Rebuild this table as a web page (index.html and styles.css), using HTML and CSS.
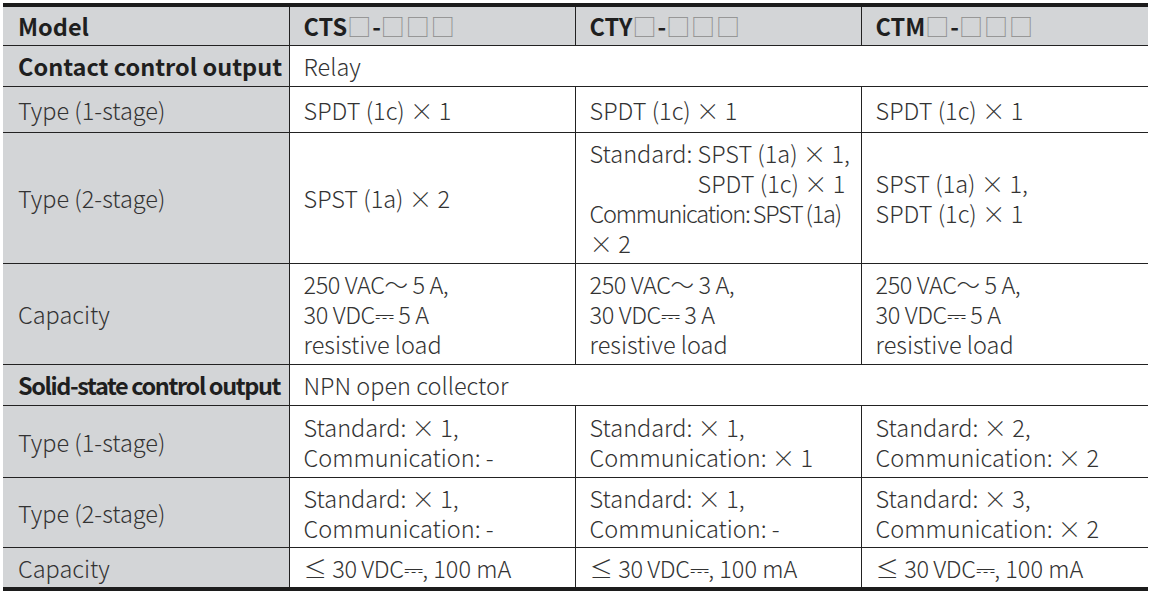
FILE: index.html
```html
<!DOCTYPE html>
<html lang="en">
<head>
<meta charset="utf-8">
<title>Control output</title>
<link rel="stylesheet" href="styles.css">
</head>
<body>
<table class="spec">
  <colgroup>
    <col class="c1"><col class="c2"><col class="c3"><col class="c4">
  </colgroup>
  <tr class="head h38">
    <th class="lab b">Model</th>
    <th class="b">CTS<span class="box">□</span>-<span class="box">□□□</span></th>
    <th class="b">CTY<span class="box">□</span>-<span class="box">□□□</span></th>
    <th class="b">CTM<span class="box">□</span>-<span class="box">□□□</span></th>
  </tr>
  <tr class="h40">
    <td class="lab b">Contact control output</td>
    <td colspan="3">Relay</td>
  </tr>
  <tr class="h45">
    <td class="lab">Type (1-stage)</td>
    <td>SPDT (1c) × 1</td>
    <td>SPDT (1c) × 1</td>
    <td>SPDT (1c) × 1</td>
  </tr>
  <tr class="h130">
    <td class="lab">Type (2-stage)</td>
    <td>SPST (1a) × 2</td>
    <td><span>Standard: </span><span class="hang">SPST (1a) × 1,<br>SPDT (1c) × 1</span><br><span class="tighter">Communication: SPST (1a)</span><br>× 2</td>
    <td>SPST (1a) × 1,<br>SPDT (1c) × 1</td>
  </tr>
  <tr class="h100">
    <td class="lab">Capacity</td>
    <td><span class="tight">250 VAC～ 5 A,<br>30 VDC⎓ 5 A</span><br>resistive load</td>
    <td><span class="tight">250 VAC～ 3 A,<br>30 VDC⎓ 3 A</span><br>resistive load</td>
    <td><span class="tight">250 VAC～ 5 A,<br>30 VDC⎓ 5 A</span><br>resistive load</td>
  </tr>
  <tr class="h40">
    <td class="lab b squeeze">Solid-state control output</td>
    <td colspan="3">NPN open collector</td>
  </tr>
  <tr class="h71">
    <td class="lab">Type (1-stage)</td>
    <td>Standard: × 1,<br>Communication: -</td>
    <td>Standard: × 1,<br>Communication: × 1</td>
    <td>Standard: × 2,<br>Communication: × 2</td>
  </tr>
  <tr class="h69">
    <td class="lab">Type (2-stage)</td>
    <td>Standard: × 1,<br>Communication: -</td>
    <td>Standard: × 1,<br>Communication: -</td>
    <td>Standard: × 3,<br>Communication: × 2</td>
  </tr>
  <tr class="h39 last">
    <td class="lab">Capacity</td>
    <td>≤ <span class="tight">30 VDC⎓</span>, 100 mA</td>
    <td>≤ <span class="tight">30 VDC⎓</span>, 100 mA</td>
    <td>≤ <span class="tight">30 VDC⎓</span>, 100 mA</td>
  </tr>
</table>
</body>
</html>
```

FILE: styles.css
```css
html, body {
  margin: 0;
  padding: 0;
  background: #ffffff;
}

body {
  padding: 3px 0 0 3px;
  font-family: "Noto Sans CJK KR", "Noto Sans", "DejaVu Sans", sans-serif;
  color: #333333;
}

.spec {
  width: 1145px;
  table-layout: fixed;
  border-collapse: collapse;
  border-top: 4px solid #1c1c1c;
  border-bottom: 4px solid #1c1c1c;
  font-size: 23.5px;
  line-height: 30px;
  font-weight: 300;
}

.c1, .c2, .c3 { width: 286px; }
.c4 { width: 287px; }

.spec th,
.spec td {
  padding: 0 10px 0 14px;
  border-top: 1px solid #222222;
  border-left: 1px solid #222222;
  vertical-align: middle;
  text-align: left;
  font-weight: 300;
  white-space: nowrap;
}

.spec th:first-child,
.spec td:first-child {
  border-left: none;
  padding-left: 15px;
}

.spec tr.head th { border-top: none; }

.head th { background: #d3d5d7; }
.lab { background: #d3d5d7; }

.spec .b { font-weight: 700; color: #1f1f1f; }

.squeeze { letter-spacing: -1.4px; }

.box {
  font-weight: 300;
  color: #8c8c8c;
  font-size: 24px;
  letter-spacing: 1px;
}

.hang {
  display: inline-block;
  vertical-align: top;
}

.tight { letter-spacing: -0.4px; }
.tighter { letter-spacing: -1.2px; word-spacing: -1px; }

.h38 > * { height: 38px; }
.h40 > * { height: 40px; }
.h45 > * { height: 45px; }
.h130 > * { height: 130px; }
.h100 > * { height: 100px; }
.h71 > * { height: 71px; }
.h69 > * { height: 69px; }
.h39 > * { height: 39px; }
```
